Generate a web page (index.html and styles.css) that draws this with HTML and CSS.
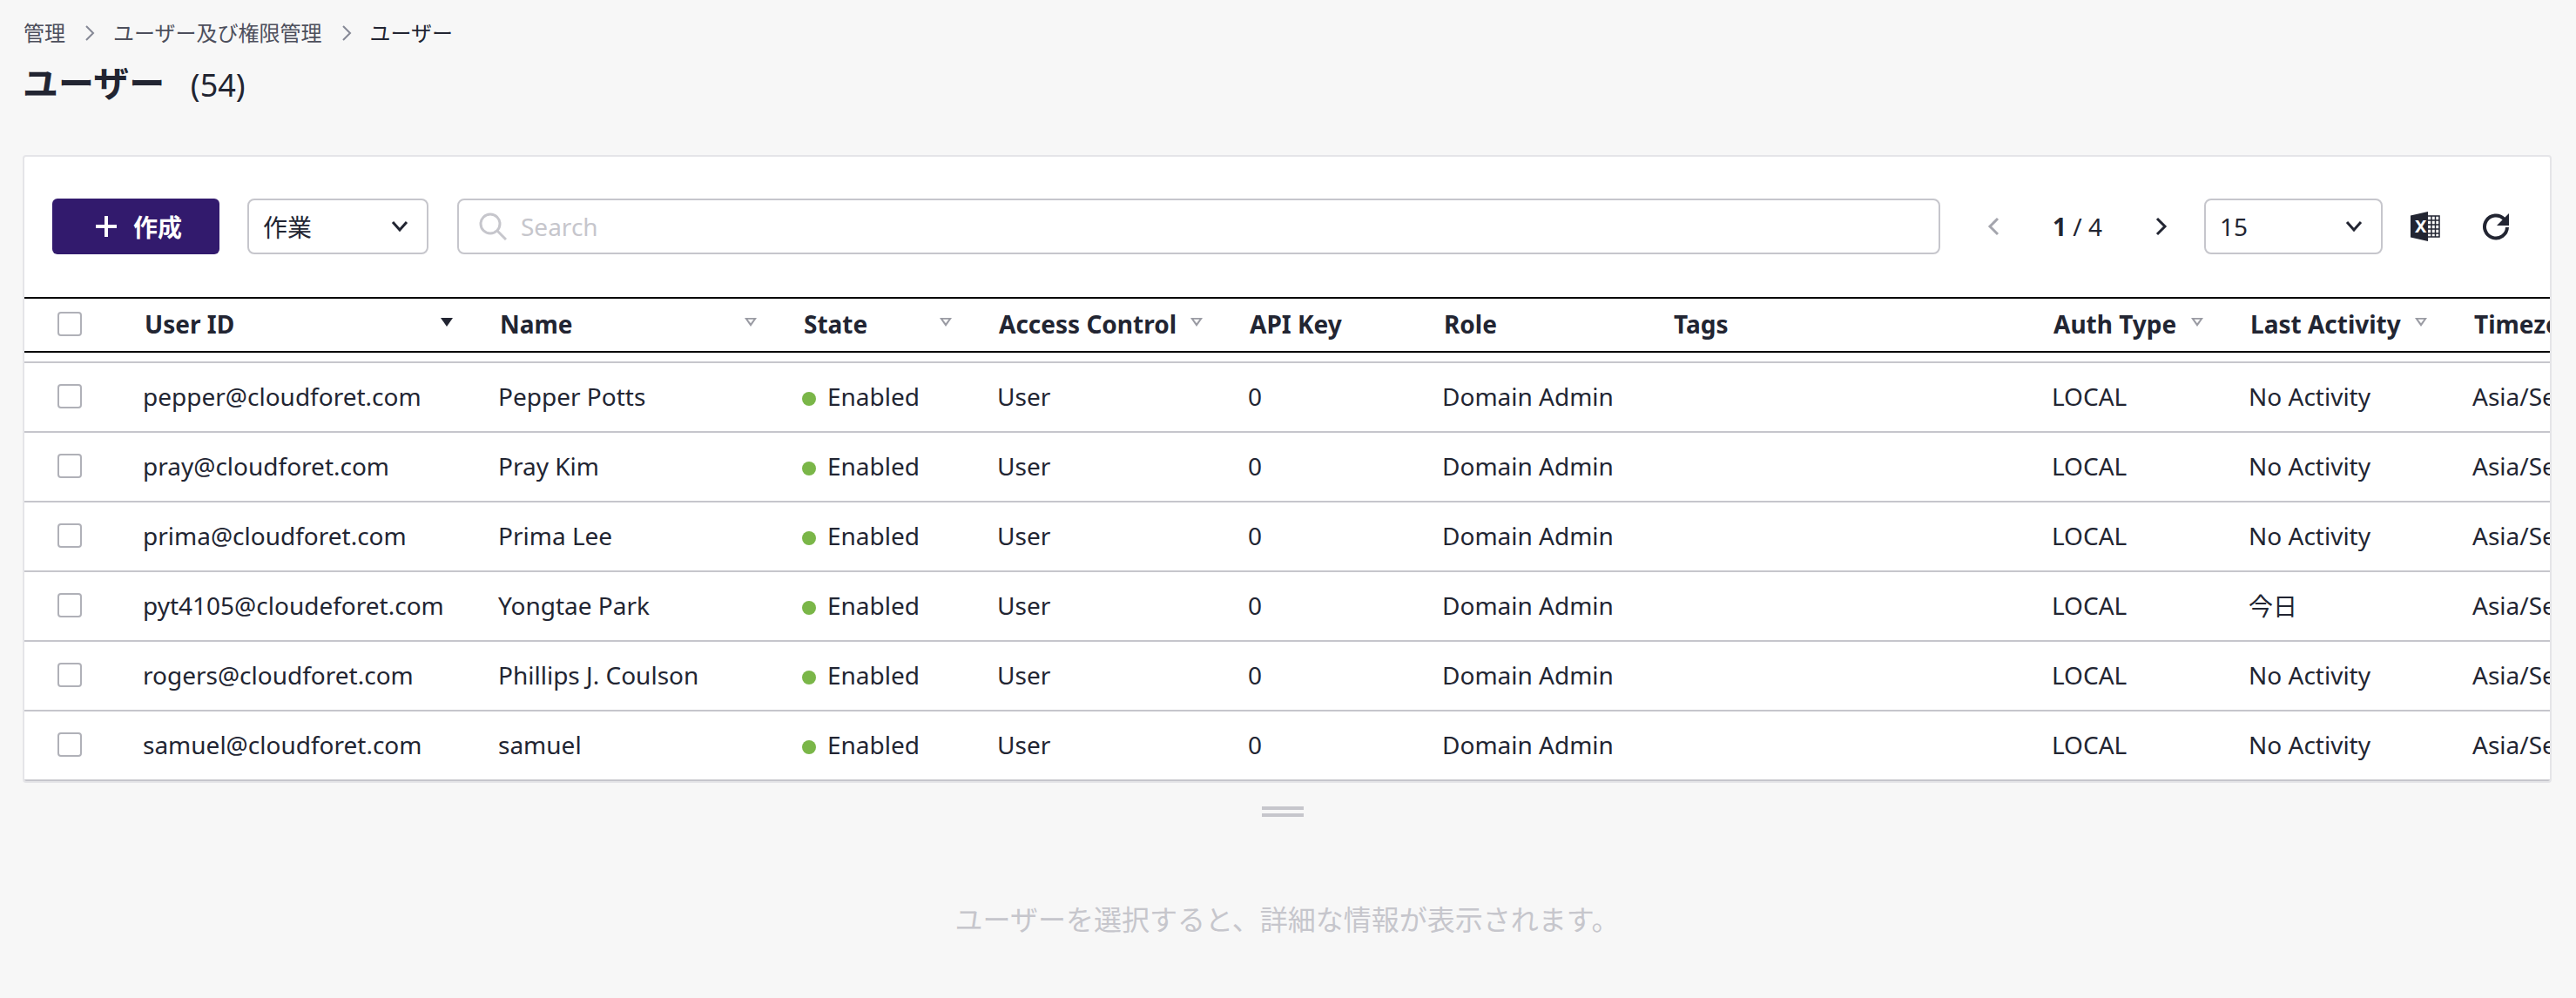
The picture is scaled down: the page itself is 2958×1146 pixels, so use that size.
FILE: index.html
```html
<!DOCTYPE html>
<html lang="ja">
<head>
  <meta charset="UTF-8" />
  <title>ユーザー</title>
  <link rel="stylesheet" href="styles.css">
</head>
<body>
  <nav class="breadcrumb">
    <span>管理</span>
    <svg class="crumb-sep" viewBox="0 0 12 20"><path d="M2 2l8 8-8 8"/></svg>
    <span>ユーザー及び権限管理</span>
    <svg class="crumb-sep" viewBox="0 0 12 20"><path d="M2 2l8 8-8 8"/></svg>
    <span class="current">ユーザー</span>
  </nav>
  <h1 class="title">ユーザー <small>(54)</small></h1>

  <section class="card">
    <div class="toolbar">
      <button class="btn-create">
        <svg class="plus" viewBox="0 0 26 26"><path d="M13 1v24M1 13h24"/></svg>
        作成
      </button>
      <div class="dropdown action">
        <span>作業</span>
        <svg class="chevron" viewBox="0 0 20 14"><path d="M2 2l8 9 8-9"/></svg>
      </div>
      <div class="search">
        <svg class="search-icon" viewBox="0 0 32 32"><circle cx="13" cy="13" r="11"/><path d="M21 21l10 10"/></svg>
        <input type="text" placeholder="Search">
      </div>
      <div class="pager">
        <svg class="page-arrow off" viewBox="0 0 14 22"><path d="M12 2l-9 9 9 9"/></svg>
        <span class="page-text"><b>1</b> / 4</span>
        <svg class="page-arrow" viewBox="0 0 14 22"><path d="M2 2l9 9-9 9"/></svg>
      </div>
      <div class="dropdown size">
        <span>15</span>
        <svg class="chevron" viewBox="0 0 20 14"><path d="M2 2l8 9 8-9"/></svg>
      </div>
      <svg class="excel" viewBox="0 0 34 34">
        <path class="fill" d="M0 4.500L20 0v34L0 29.500z"/>
        <path class="grid" d="M20 5h13v24H20M24 5v24M28.500 5v24M20 10h13M20 15h13M20 20h13M20 25h13"/>
        <text x="5" y="23.500">X</text>
      </svg>
      <svg class="refresh" viewBox="0 0 32 32">
        <path class="ring" d="M25.500 7.500A13 13 0 1 0 29 17"/>
        <path class="fill" d="M31 1v14H17z"/>
      </svg>
    </div>

    <div class="table-wrap">
      <table>
        <colgroup>
          <col class="c-check"><col class="c-id"><col class="c-name"><col class="c-state"><col class="c-access"><col class="c-api"><col class="c-role"><col class="c-tags"><col class="c-auth"><col class="c-last"><col class="c-tz">
        </colgroup>
        <thead>
          <tr>
            <th class="check"><span class="box"></span></th>
            <th><div class="th-in">User ID<i class="sort active"></i></div></th>
            <th><div class="th-in">Name<i class="sort"></i></div></th>
            <th><div class="th-in">State<i class="sort"></i></div></th>
            <th><div class="th-in">Access Control<i class="sort"></i></div></th>
            <th><div class="th-in">API Key</div></th>
            <th><div class="th-in">Role</div></th>
            <th><div class="th-in">Tags</div></th>
            <th><div class="th-in">Auth Type<i class="sort"></i></div></th>
            <th><div class="th-in">Last Activity<i class="sort"></i></div></th>
            <th><div class="th-in">Timezone</div></th>
          </tr>
        </thead>
        <tbody>
          <tr class="gap"><td colspan="11"></td></tr>
          <tr>
            <td class="check"><span class="box"></span></td>
            <td>pepper@cloudforet.com</td><td>Pepper Potts</td>
            <td><span class="dot"></span>Enabled</td><td>User</td><td>0</td><td>Domain Admin</td><td></td>
            <td>LOCAL</td><td>No Activity</td><td>Asia/Seoul</td>
          </tr>
          <tr>
            <td class="check"><span class="box"></span></td>
            <td>pray@cloudforet.com</td><td>Pray Kim</td>
            <td><span class="dot"></span>Enabled</td><td>User</td><td>0</td><td>Domain Admin</td><td></td>
            <td>LOCAL</td><td>No Activity</td><td>Asia/Seoul</td>
          </tr>
          <tr>
            <td class="check"><span class="box"></span></td>
            <td>prima@cloudforet.com</td><td>Prima Lee</td>
            <td><span class="dot"></span>Enabled</td><td>User</td><td>0</td><td>Domain Admin</td><td></td>
            <td>LOCAL</td><td>No Activity</td><td>Asia/Seoul</td>
          </tr>
          <tr>
            <td class="check"><span class="box"></span></td>
            <td>pyt4105@cloudeforet.com</td><td>Yongtae Park</td>
            <td><span class="dot"></span>Enabled</td><td>User</td><td>0</td><td>Domain Admin</td><td></td>
            <td>LOCAL</td><td>今日</td><td>Asia/Seoul</td>
          </tr>
          <tr>
            <td class="check"><span class="box"></span></td>
            <td>rogers@cloudforet.com</td><td>Phillips J. Coulson</td>
            <td><span class="dot"></span>Enabled</td><td>User</td><td>0</td><td>Domain Admin</td><td></td>
            <td>LOCAL</td><td>No Activity</td><td>Asia/Seoul</td>
          </tr>
          <tr>
            <td class="check"><span class="box"></span></td>
            <td>samuel@cloudforet.com</td><td>samuel</td>
            <td><span class="dot"></span>Enabled</td><td>User</td><td>0</td><td>Domain Admin</td><td></td>
            <td>LOCAL</td><td>No Activity</td><td>Asia/Seoul</td>
          </tr>
        </tbody>
      </table>
    </div>
  </section>

  <div class="handle"><span></span><span></span></div>
  <p class="empty">ユーザーを選択すると、詳細な情報が表示されます。</p>
</body>
</html>
```

FILE: styles.css
```css
* {
  box-sizing: border-box;
}
html, body {
  height: 1146px;
  overflow: hidden;
}
body {
  margin: 0;
  padding: 0 28px 0 26px;
  background: #f7f7f7;
  color: #222532;
  font-family: "Noto Sans", "Noto Sans CJK JP", sans-serif;
  font-size: 28px;
}

.breadcrumb {
  display: flex;
  align-items: center;
  height: 36px;
  margin-top: 20px;
  padding-left: 1px;
  color: #4d4f5c;
  font-size: 24px;
  line-height: 36px;
}
.crumb-sep {
  width: 12px;
  height: 20px;
  margin: 0 21px 0 22px;
  fill: none;
  stroke: #858895;
  stroke-width: 2;
}
.current {
  color: #222532;
}
.title {
  margin: 11px 0 0;
  height: 56px;
  font-size: 41px;
  line-height: 56px;
  font-weight: 700;
}
.title small {
  margin-left: 19px;
  font-size: 36px;
  font-weight: 400;
}

.card {
  margin-top: 55px;
  height: 721px;
  background: #fff;
  border: 2px solid #e5e5e8;
  border-radius: 4px;
  overflow: hidden;
}
.toolbar {
  display: flex;
  align-items: center;
  height: 161px;
  padding: 0 46px 1px 32px;
}
.btn-create {
  display: flex;
  align-items: center;
  justify-content: center;
  gap: 18px;
  width: 192px;
  height: 64px;
  padding-left: 12px;
  background: #321a6d;
  color: #fff;
  border: none;
  border-radius: 6px;
  font: 700 28px "Noto Sans", "Noto Sans CJK JP", sans-serif;
}
.plus {
  width: 26px;
  height: 26px;
  fill: none;
  stroke: #fff;
  stroke-width: 4;
}
.dropdown {
  display: flex;
  align-items: center;
  justify-content: space-between;
  height: 64px;
  padding: 0 21px 0 16px;
  background: #fff;
  border: 2px solid #c6c6cc;
  border-radius: 8px;
}
.dropdown.action {
  width: 208px;
  margin-left: 32px;
}
.dropdown.size {
  width: 205px;
}
.chevron {
  width: 20px;
  height: 14px;
  fill: none;
  stroke: #222532;
  stroke-width: 3;
}
.search {
  flex: 1;
  display: flex;
  align-items: center;
  gap: 14px;
  height: 64px;
  margin-left: 33px;
  padding-left: 23px;
  border: 2px solid #c6c6cc;
  border-radius: 8px;
}
.search-icon {
  flex: none;
  width: 32px;
  height: 32px;
  fill: none;
  stroke: #c6c6cc;
  stroke-width: 3;
}
.search input {
  flex: 1;
  border: none;
  outline: none;
  background: none;
  color: #222532;
  font: inherit;
}
.search input::placeholder {
  color: #c6c6cc;
  opacity: 1;
}
.pager {
  display: flex;
  align-items: center;
  justify-content: space-between;
  width: 226px;
  margin: 0 42px 0 35px;
  padding: 0 0 0 19px;
}
.page-arrow {
  width: 14px;
  height: 22px;
  fill: none;
  stroke: #222532;
  stroke-width: 3;
}
.page-arrow.off {
  stroke: #a4a5ad;
}
.page-text b {
  font-weight: 700;
}
.excel {
  width: 34px;
  height: 34px;
  margin-left: 32px;
}
.excel .fill {
  fill: #222532;
}
.excel .grid {
  fill: none;
  stroke: #222532;
  stroke-width: 1.500;
}
.excel text {
  fill: #fff;
  font-size: 20px;
  font-weight: 700;
}
.refresh {
  width: 32px;
  height: 32px;
  margin-left: 48px;
}
.refresh .ring {
  fill: none;
  stroke: #222532;
  stroke-width: 4;
}
.refresh .fill {
  fill: #222532;
}

.table-wrap {
  overflow: hidden;
}
table {
  table-layout: fixed;
  width: 3000px;
  border-collapse: separate;
  border-spacing: 0;
}
.c-check { width: 128px; }
.c-id { width: 408px; }
.c-name { width: 349px; }
.c-state { width: 224px; }
.c-access { width: 288px; }
.c-api { width: 223px; }
.c-role { width: 264px; }
.c-tags { width: 436px; }
.c-auth { width: 226px; }
.c-last { width: 257px; }
.c-tz { width: 197px; }

th {
  height: 64px;
  padding: 0 0 2px 10px;
  border-top: 2px solid #000;
  border-bottom: 2px solid #000;
  text-align: left;
  font-weight: 700;
  white-space: nowrap;
}
.th-in {
  display: flex;
  justify-content: space-between;
  align-items: center;
  padding-right: 44px;
}
.sort {
  flex: none;
  position: relative;
  width: 14px;
  height: 10px;
  margin-top: -4px;
  clip-path: polygon(0 0, 100% 0, 50% 100%);
  background: #9a9ba3;
}
.sort::after {
  content: "";
  position: absolute;
  inset: 0;
  background: #fff;
  clip-path: polygon(26% 18%, 74% 18%, 50% 62%);
}
.sort.active {
  background: #222532;
}
.sort.active::after {
  display: none;
}
td {
  height: 80px;
  padding: 0 0 2px 8px;
  border-bottom: 2px solid #c6c6cc;
  white-space: nowrap;
}
.gap td {
  height: 12px;
  padding: 0;
}
th.check, td.check {
  padding: 0 0 2px 38px;
}
.box {
  display: block;
  width: 28px;
  height: 28px;
  background: #fff;
  border: 2px solid #b0b1b8;
  border-radius: 4px;
}
.dot {
  display: inline-block;
  width: 16px;
  height: 16px;
  margin-right: 13px;
  border-radius: 50%;
  background: #7ab648;
}

.handle {
  display: flex;
  flex-direction: column;
  gap: 4px;
  width: 48px;
  margin: 27px 0 0 1423px;
}
.handle span {
  height: 4px;
  background: #c6c6cc;
}
.empty {
  margin: 95px 0 0;
  text-align: center;
  color: #c6c6cc;
  font-size: 32px;
  line-height: 46px;
}
```
